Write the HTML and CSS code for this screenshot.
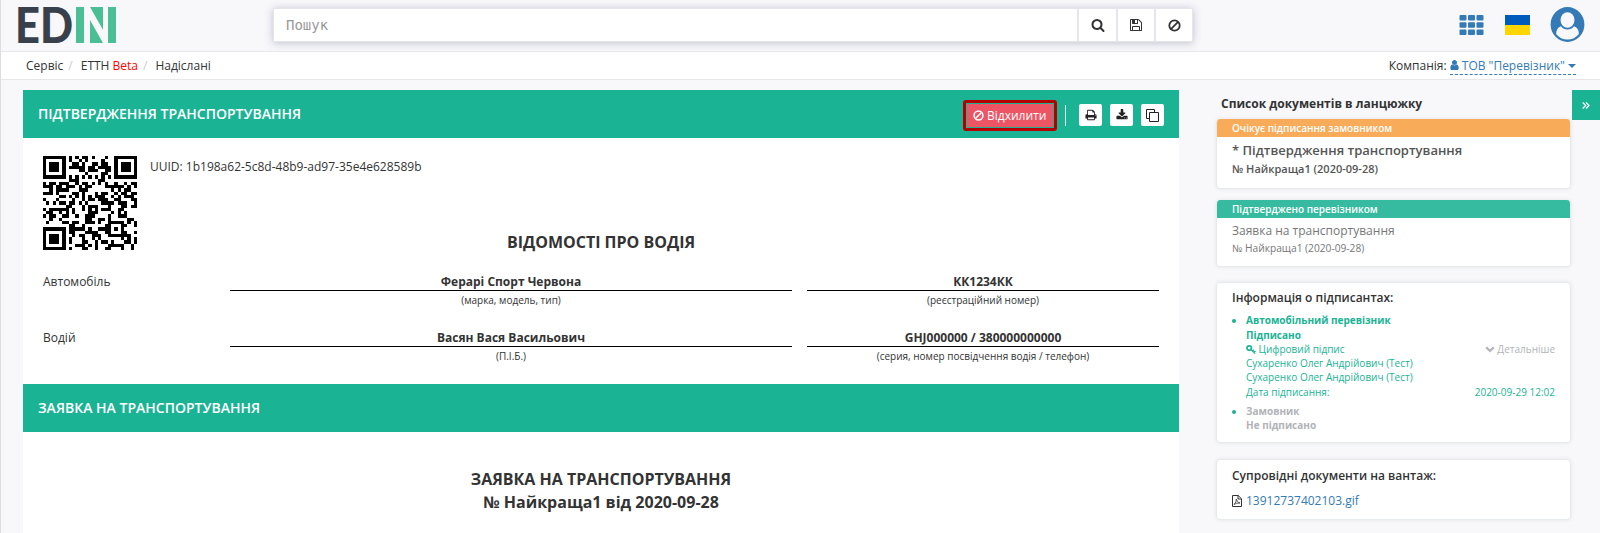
FILE: index.html
```html
<!DOCTYPE html>
<html lang="uk">
<head>
<meta charset="utf-8">
<title>EDIN</title>
<link rel="stylesheet" href="styles.css">
</head>
<body>
<svg class="defs" width="0" height="0">
  <symbol id="ban" viewBox="0 0 16 16"><circle cx="8" cy="8" r="6.4" fill="none" stroke="currentColor" stroke-width="2.2"/><path d="M12.4 3.6 3.6 12.4" stroke="currentColor" stroke-width="2.2"/></symbol>
  <symbol id="search" viewBox="0 0 1792 1792"><path fill="currentColor" d="M1216 832q0-185-131.5-316.5t-316.5-131.5-316.5 131.5-131.5 316.5 131.5 316.5 316.5 131.5 316.5-131.5 131.5-316.5zm512 832q0 52-38 90t-90 38q-54 0-90-38l-343-342q-179 124-399 124-143 0-273.5-55.5t-225-150-150-225-55.5-273.5 55.5-273.5 150-225 225-150 273.5-55.5 273.5 55.5 225 150 150 225 55.5 273.5q0 220-124 399l343 343q37 37 37 90z"/></symbol>
  <symbol id="save" viewBox="0 0 1792 1792"><path fill="currentColor" d="M512 1536h768v-384h-768v384zm896 0h128v-896q0-14-10-38.5t-20-34.5l-281-281q-10-10-34-20t-39-10v416q0 40-28 68t-68 28h-576q-40 0-68-28t-28-68v-416h-128v1280h128v-416q0-40 28-68t68-28h832q40 0 68 28t28 68v416zm-384-928v-320q0-13-9.500-22.500t-22.500-9.500h-192q-13 0-22.500 9.500t-9.500 22.500v320q0 13 9.500 22.500t22.500 9.500h192q13 0 22.500-9.500t9.500-22.500zm640 32v928q0 40-28 68t-68 28h-1344q-40 0-68-28t-28-68v-1344q0-40 28-68t68-28h928q40 0 88 20t76 48l280 280q28 28 48 76t20 88z"/></symbol>
  <symbol id="print" viewBox="0 0 1792 1792"><path fill="currentColor" d="M448 1536h896v-256h-896v256zm0-640h896v-384h-160q-40 0-68-28t-28-68v-160h-640v640zm1152 64q0-26-19-45t-45-19-45 19-19 45 19 45 45 19 45-19 19-45zm128 0v416q0 13-9.500 22.500t-22.500 9.500h-224v160q0 40-28 68t-68 28h-960q-40 0-68-28t-28-68v-160h-224q-13 0-22.500-9.500t-9.500-22.500v-416q0-79 56.500-135.500t135.500-56.500h64v-544q0-40 28-68t68-28h672q40 0 88 20t76 48l152 152q28 28 48 76t20 88v256h64q79 0 135.500 56.500t56.500 135.500z"/></symbol>
  <symbol id="download" viewBox="0 0 1792 1792"><path fill="currentColor" d="M1344 1344q0-26-19-45t-45-19-45 19-19 45 19 45 45 19 45-19 19-45zm256 0q0-26-19-45t-45-19-45 19-19 45 19 45 45 19 45-19 19-45zm128-224v320q0 40-28 68t-68 28h-1472q-40 0-68-28t-28-68v-320q0-40 28-68t68-28h465l135 136q58 56 136 56t136-56l136-136h464q40 0 68 28t28 68zm-325-569q17 41-14 70l-448 448q-18 19-45 19t-45-19l-448-448q-31-29-14-70 17-39 59-39h256v-448q0-26 19-45t45-19h256q26 0 45 19t19 45v448h256q42 0 59 39z"/></symbol>
  <symbol id="user" viewBox="256 128 1280 1536"><path fill="currentColor" d="M1536 1399q0 109-62.500 187t-150.500 78h-854q-88 0-150.500-78t-62.500-187q0-85 8.500-160.500t31.500-152 58.500-131 94-89 134.500-34.500q131 128 313 128t313-128q76 0 134.500 34.500t94 89 58.500 131 31.500 152 8.500 160.500zm-256-887q0 159-112.500 271.500t-271.500 112.500-271.500-112.500-112.500-271.500 112.500-271.500 271.500-112.500 271.500 112.500 112.500 271.500z"/></symbol>
  <symbol id="copy" viewBox="0 0 13 13"><path d="M3.500 9.500h-3v-9h8v2.500M3.500 3.500h9v9h-9z" fill="none" stroke="currentColor"/></symbol>
</svg>

<div class="page">
  <header class="topbar">
    <svg class="logo" width="99" height="37" viewBox="0 0 99 37">
      <text class="logo-text" x="-3" y="36" textLength="58" lengthAdjust="spacingAndGlyphs">ED</text>
      <path fill="#4abf95" d="M58 0h8v36h-8zM90 0h8v36h-8zM72 0h13v23zM72 13l13 23H72z"/>
    </svg>
    <div class="search">
      <span class="search-input">Пошук</span>
      <span class="search-btn"><svg width="14" height="14"><use href="#search"/></svg></span>
      <span class="search-btn"><svg width="14" height="14"><use href="#save"/></svg></span>
      <span class="search-btn"><svg width="13" height="13"><use href="#ban"/></svg></span>
    </div>
    <div class="tools">
      <svg width="25" height="20" viewBox="0 0 24 20" fill="#337ab7"><rect width="7" height="5.500" rx="1"/><rect x="8.500" width="7" height="5.500" rx="1"/><rect x="17" width="7" height="5.500" rx="1"/><rect y="7.200" width="7" height="5.500" rx="1"/><rect x="8.500" y="7.200" width="7" height="5.500" rx="1"/><rect x="17" y="7.200" width="7" height="5.500" rx="1"/><rect y="14.400" width="7" height="5.500" rx="1"/><rect x="8.500" y="14.400" width="7" height="5.500" rx="1"/><rect x="17" y="14.400" width="7" height="5.500" rx="1"/></svg>
      <span class="flag"></span>
      <svg width="35" height="35" viewBox="0 0 34 35"><ellipse cx="17" cy="17.500" rx="16.900" ry="17.400" fill="#337ab7"/><path d="M10.500 19.300q-4.700 1.500-4.900 7.700Q10 32.500 17 32.500T28.400 27q-.2-6.200-4.900-7.700Q21 22.500 17 22.500t-6.500-3.200z" fill="#f8f8fb"/><ellipse cx="17" cy="13" rx="7" ry="7.800" fill="#f8f8fb"/></svg>
    </div>
  </header>

  <nav class="crumbs">
    <ol class="crumb-list"><li>Сервіс</li><li>ЕТТН <span class="beta">Beta</span></li><li>Надіслані</li></ol>
    <div class="company">Компанія: <a class="company-link"><svg width="9" height="10" preserveAspectRatio="none"><use href="#user"/></svg> ТОВ "Перевізник" <i class="caret"></i></a></div>
  </nav>

  <div class="body">
    <main class="doc">
      <div class="bar">
        <h1 class="bar-title">ПІДТВЕРДЖЕННЯ ТРАНСПОРТУВАННЯ</h1>
        <div class="actions">
          <span class="reject-frame"><button class="reject"><svg width="11" height="11"><use href="#ban"/></svg> Відхилити</button></span>
          <span class="sep"></span>
          <button class="icon-btn"><svg width="12" height="12"><use href="#print"/></svg></button>
          <button class="icon-btn"><svg width="12" height="12"><use href="#download"/></svg></button>
          <button class="icon-btn"><svg width="13" height="13"><use href="#copy"/></svg></button>
        </div>
      </div>
      <section class="driver">
        <div class="ident"><svg class="qr" id="qr"></svg><span class="uuid">UUID: <span id="uuid">1b198a62-5c8d-48b9-ad97-35e4e628589b</span></span></div>
        <h2 class="heading">ВІДОМОСТІ ПРО ВОДІЯ</h2>
        <div class="row"><span class="label">Автомобіль</span><div class="field"><b class="value">Ферарі Спорт Червона</b><small class="hint">(марка, модель, тип)</small></div><div class="field"><b class="value">КК1234КК</b><small class="hint">(реєстраційний номер)</small></div></div>
        <div class="row"><span class="label">Водій</span><div class="field"><b class="value">Васян Вася Васильович</b><small class="hint">(П.І.Б.)</small></div><div class="field"><b class="value">GHJ000000 / 380000000000</b><small class="hint">(серия, номер посвідчення водія / телефон)</small></div></div>
      </section>
      <div class="bar"><h1 class="bar-title">ЗАЯВКА НА ТРАНСПОРТУВАННЯ</h1></div>
      <h2 class="heading request">ЗАЯВКА НА ТРАНСПОРТУВАННЯ<br>№ Найкраща1 від 2020-09-28</h2>
    </main>

    <aside class="side">
      <h3 class="side-title">Список документів в ланцюжку</h3>
      <div class="card chain current">
        <div class="status">Очікує підписання замовником</div>
        <div class="doc-name">* Підтвердження транспортування</div>
        <div class="doc-num">№ Найкраща1 (2020-09-28)</div>
      </div>
      <div class="card chain done">
        <div class="status">Підтверджено перевізником</div>
        <div class="doc-name">Заявка на транспортування</div>
        <div class="doc-num">№ Найкраща1 (2020-09-28)</div>
      </div>
      <div class="card signers">
        <h4 class="card-title">Інформація о підписантах:</h4>
        <ul class="sign-list">
          <li class="signed"><b>Автомобільний перевізник</b><b>Підписано</b>
            <div class="split"><span><svg class="key" width="10" height="9" viewBox="0 0 10 9" fill="none" stroke="currentColor"><circle cx="3.200" cy="3.100" r="2.200" stroke-width="1.700"/><path d="M4.800 4.500 9.300 8.500M6.500 6l1.300-1.300M8 7.500l1.500-1.500" stroke-width="1.400"/></svg> Цифровий підпис</span><span class="more"><svg width="10" height="7" viewBox="0 0 10 7"><path d="M1.200 1.200 5 5l3.800-3.800" fill="none" stroke="currentColor" stroke-width="2.200"/></svg> Детальніше</span></div>
            <div>Сухаренко Олег Андрійович (Тест)</div><div>Сухаренко Олег Андрійович (Тест)</div>
            <div class="split date"><span>Дата підписання:</span><span>2020-09-29 12:02</span></div></li>
          <li class="unsigned"><b>Замовник</b><b>Не підписано</b></li>
        </ul>
      </div>
      <div class="card files">
        <h4 class="card-title">Супровідні документи на вантаж:</h4>
        <div class="file"><svg width="10" height="12" viewBox="0 0 10 12" fill="none" stroke="#333"><path d="M.5.5h5.700l3.300 3.300v7.700h-9zM6 .5V4h3.500"/><path d="M2 9.500Q4.500 7.500 4.300 4 4.700 7.500 8 8 4.500 7.700 2 9.500z" stroke-width=".8"/></svg><a class="file-link">13912737402103.gif</a></div>
      </div>
    </aside>
    <div class="toggle"><svg width="8" height="7" viewBox="0 0 8 7"><path d="M.7.500 3.700 3.500.7 6.500M4 .5l3 3-3 3" fill="none" stroke="#fff" stroke-width="1.200"/></svg></div>
  </div>
</div>
<script src="qr.js"></script>
</body>
</html>
```
FILE: styles.css
```css
* { box-sizing: border-box; }
body { margin: 0; background: #f8f8fb; color: #333; font: 12px/1.42857 "Open Sans", "Noto Sans", sans-serif; }
h1, h2, h3, h4, ul, ol { margin: 0; padding: 0; }
.defs { position: absolute; }
.page { height: 533px; overflow: hidden; border-left: 1px solid #ddd; }
.topbar { display: flex; height: 52px; border-bottom: 1px solid #e7e7ea; padding: 0 15px 0 17px; }
.logo { margin-top: 7px; flex: none; overflow: visible; }
.logo-text { font: 900 50px Lato, sans-serif; fill: #38404c; }
.search { display: flex; flex: none; width: 920px; height: 34px; margin: 8px 0 0 156px; background: #fff; border: 1px solid #e5e6eb; box-shadow: 0 1px 8px rgba(60, 60, 100, .3); }
.search-input { flex: 1; padding-left: 12px; font: 14px/32px "DejaVu Sans Mono", monospace; color: #999; }
.search-btn { display: flex; align-items: center; justify-content: center; width: 39px; border-left: 2px solid #e5e6eb; }
.search-btn + .search-btn { width: 38px; }
.tools { display: flex; align-items: center; gap: 20.500px; margin-left: auto; padding-bottom: 2px; }
.flag { width: 25px; height: 20px; background: linear-gradient(#005bbb 50%, #ffd500 50%); }
.crumbs { display: flex; justify-content: space-between; height: 28px; padding: 0 24px 0 25px; background: #fff; border-bottom: 1px solid #e7e7ea; line-height: 27px; }
.crumb-list { display: flex; list-style: none; }
.crumb-list li + li::before { content: "/"; color: #ccc; padding: 0 8px 0 5px; }
.beta { color: #f00; }
.company-link { display: inline-block; height: 23px; color: #337ab7; border-bottom: 1px dashed #337ab7; }
.caret { display: inline-block; border: 4px solid transparent; border-top-color: currentColor; border-bottom: 0; vertical-align: 2px; }
.body { display: flex; align-items: flex-start; padding: 10px 0 0 22px; }
.doc { width: 1156px; height: 460px; background: #fff; }
.bar { display: flex; align-items: center; justify-content: space-between; height: 48px; padding: 0 15px; background: #1ab394; }
.bar-title { font-size: 14px; font-weight: 600; color: #fff; }
.actions { display: flex; align-items: center; padding-top: 2px; }
.reject-frame { border: 3px solid #b40000; border-radius: 3px; padding: 1px; }
.reject { display: flex; align-items: center; gap: 3px; width: 86px; height: 23px; padding: 0 6px; border: 0; background: #ed5565; color: #fff; font: 12px "Open Sans", sans-serif; white-space: nowrap; }
.sep { width: 1px; height: 21px; margin: 0 13px 0 8px; background: #fff; }
.icon-btn { display: flex; align-items: center; justify-content: center; width: 23px; height: 22px; margin-left: 8px; padding: 0; border: 0; border-radius: 2px; background: #fff; color: #222; }
.sep + .icon-btn { margin-left: 0; }
.driver { height: 246px; padding: 18px 20px 0; }
.ident { display: flex; height: 75px; }
.qr { width: 94px; height: 94px; flex: none; }
.uuid { margin: 2px 0 0 13px; }
.heading { font-size: 16px; font-weight: 700; line-height: 23px; text-align: center; }
.row { display: grid; grid-template-columns: 172px 562px 352px; column-gap: 15px; height: 56px; }
.heading + .row { margin-top: 19px; }
.row .field { text-align: center; }
.value { display: block; height: 18px; border-bottom: 1px solid #000; font-weight: 700; }
.hint { display: block; font-size: 10px; line-height: 18px; }
.request { padding-top: 36px; }
.side { width: 355px; margin-left: 37px; }
.side-title { padding: 5px 0 0 5px; height: 29px; font-size: 12px; font-weight: 700; }
.card { background: #fff; border: 1px solid #e7eaec; border-radius: 4px; box-shadow: 0 0 4px rgba(0, 0, 0, .08); }
.chain { overflow: hidden; border-top: 0; padding: 0 15px; }
.status { margin: 0 -15px 4px; padding-left: 15px; height: 18px; line-height: 18px; font-size: 10px; font-weight: 600; color: #fff; background: #f8ac59; }
.current { height: 70px; margin-bottom: 11px; color: #555; font-weight: 600; }
.current .doc-name { font-size: 13px; }
.doc-num { font-size: 10.200px; line-height: 18px; }
.current .doc-num { font-size: 11px; }
.done { height: 67px; margin-bottom: 15px; color: #777; }
.done .status { background: #36bba0; }
.card-title { font-size: 12px; font-weight: 600; }
.signers { height: 161px; padding: 8px 15px; margin-bottom: 16px; font-size: 10px; line-height: 14.300px; }
.sign-list { padding-left: 14px; margin-top: 8px; color: #1ab394; }
.sign-list b { display: block; font-weight: 700; }
.split { display: flex; justify-content: space-between; }
.key { vertical-align: -1px; }
.more, .unsigned b { color: #b1b3b6; }
.unsigned { margin-top: 5px; }
.files { height: 61px; padding: 7px 15px; }
.file { display: flex; align-items: center; gap: 4px; margin-top: 8px; }
.file-link { color: #337ab7; }
.toggle { display: flex; align-items: center; justify-content: center; width: 28px; height: 30px; margin-left: 1px; background: #1ab394; flex: none; }
```
FILE: qr.js
```js
// QR code, version 3 (29 x 29 modules), byte mode, single block.
const SIZE = 29;

function mul(a, b) {
  let r = 0;
  for (; b; b >>= 1) { if (b & 1) r ^= a; a <<= 1; if (a & 256) a ^= 0x11d; }
  return r;
}

function codewords(text, dataLen) {
  let bits = "0100" + text.length.toString(2).padStart(8, "0");
  for (const c of text) bits += c.charCodeAt(0).toString(2).padStart(8, "0");
  bits += "0000";
  const data = bits.match(/.{8}/g).map(b => parseInt(b, 2));
  for (let i = 0; data.length < dataLen; i++) data.push(i % 2 ? 0x11 : 0xec);
  const n = 70 - dataLen;
  let gen = [1], root = 1;
  for (let i = 0; i < n; i++) {
    const next = gen.concat(0);
    gen.forEach((g, j) => { next[j + 1] ^= mul(g, root); });
    gen = next;
    root = mul(root, 2);
  }
  const rem = data.concat(Array(n).fill(0));
  for (let i = 0; i < dataLen; i++) {
    const f = rem[i];
    gen.forEach((g, j) => { rem[i + j] ^= mul(g, f); });
  }
  return data.concat(rem.slice(dataLen));
}

const MASKS = [
  (r, c) => (r + c) % 2 === 0, (r, c) => r % 2 === 0, (r, c) => c % 3 === 0, (r, c) => (r + c) % 3 === 0,
  (r, c) => ((r >> 1) + Math.floor(c / 3)) % 2 === 0, (r, c) => (r * c) % 2 + (r * c) % 3 === 0,
  (r, c) => ((r * c) % 2 + (r * c) % 3) % 2 === 0, (r, c) => ((r + c) % 2 + (r * c) % 3) % 2 === 0
];

function matrix(text, level, mask) {
  const m = Array.from({ length: SIZE }, () => Array(SIZE).fill(null));
  const finder = (r0, c0) => {
    for (let r = -1; r < 8; r++) for (let c = -1; c < 8; c++) {
      if (!m[r0 + r] || c0 + c < 0 || c0 + c >= SIZE) continue;
      const d = Math.max(Math.abs(r - 3), Math.abs(c - 3));
      m[r0 + r][c0 + c] = d !== 2 && d !== 4;
    }
  };
  finder(0, 0); finder(0, SIZE - 7); finder(SIZE - 7, 0);
  for (let i = 8; i < SIZE - 8; i++) m[6][i] = m[i][6] = i % 2 === 0;
  for (let r = -2; r < 3; r++) for (let c = -2; c < 3; c++) m[22 + r][22 + c] = Math.max(Math.abs(r), Math.abs(c)) !== 1;
  let fmt = ((level === "L" ? 1 : 0) << 3) | mask, rem = fmt;
  for (let i = 0; i < 10; i++) rem = (rem << 1) ^ ((rem >> 9) * 0x537);
  fmt = ((fmt << 10) | rem) ^ 0x5412;
  for (let i = 0; i < 15; i++) {
    const b = ((fmt >> i) & 1) === 1;
    m[i < 6 ? i : i < 8 ? i + 1 : SIZE - 15 + i][8] = b;
    m[8][i < 8 ? SIZE - 1 - i : i === 8 ? 7 : 14 - i] = b;
  }
  m[SIZE - 8][8] = true;
  const cw = codewords(text, level === "L" ? 55 : 44);
  let k = 0, up = true;
  for (let c = SIZE - 1; c > 0; c -= 2) {
    if (c === 6) c--;
    for (let i = 0; i < SIZE; i++) {
      const r = up ? SIZE - 1 - i : i;
      for (const x of [c, c - 1]) {
        if (m[r][x] !== null) continue;
        const bit = k < 560 && ((cw[k >> 3] >> (7 - (k & 7))) & 1) === 1;
        k++;
        m[r][x] = bit !== MASKS[mask](r, x);
      }
    }
    up = !up;
  }
  return m;
}

function draw(svg, m) {
  let d = "";
  m.forEach((row, r) => row.forEach((on, c) => { if (on) d += `M${c} ${r}h1v1h-1z`; }));
  svg.setAttribute("viewBox", `0 0 ${SIZE} ${SIZE}`);
  svg.setAttribute("shape-rendering", "crispEdges");
  svg.innerHTML = `<path d="${d}"/>`;
}

draw(document.getElementById("qr"), matrix(document.getElementById("uuid").textContent, "M", 3));
```
